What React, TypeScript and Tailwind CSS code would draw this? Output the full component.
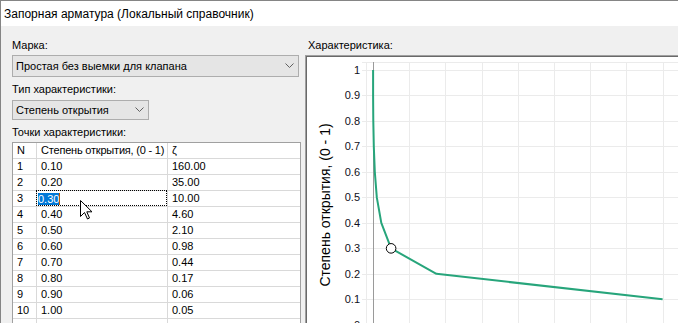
import React from "react";

const rows: [string, string, string][] = [
  ["1", "0.10", "160.00"],
  ["2", "0.20", "35.00"],
  ["3", "0.30", "10.00"],
  ["4", "0.40", "4.60"],
  ["5", "0.50", "2.10"],
  ["6", "0.60", "0.98"],
  ["7", "0.70", "0.44"],
  ["8", "0.80", "0.17"],
  ["9", "0.90", "0.06"],
  ["10", "1.00", "0.05"],
];

const Chevron = () => (
  <svg width="9" height="6" viewBox="0 0 9 6" className="block">
    <path d="M0.5 0.5 L4.5 4.5 L8.5 0.5" fill="none" stroke="#606060" strokeWidth="1" />
  </svg>
);

function Chart() {
  const yOf = (v: number) => 323.8 - 254.8 * v;
  const xOf = (z: number) => 373 + 1.81 * z;
  const pts = rows.map((r) => [xOf(parseFloat(r[2])), yOf(parseFloat(r[1]))]);
  const d = pts.map((p, i) => `${i ? "L" : "M"}${p[0].toFixed(1)} ${p[1].toFixed(1)}`).join(" ");
  const hv = [0, 0.1, 0.2, 0.3, 0.4, 0.5, 0.6, 0.7, 0.8, 0.9, 1];
  const vx = [1, 2, 3, 4, 5, 6, 7, 8, 9].map((i) => 373 + 36.2 * i);
  return (
    <svg width="380" height="270" viewBox="307 56 380 270" className="block">
      <line x1="362" y1="61.5" x2="700" y2="61.5" stroke="#ebebeb" strokeWidth="1" />
      {hv.map((v) => (
        <line key={v} x1="362" y1={Math.round(yOf(v)) + 0.5} x2="700" y2={Math.round(yOf(v)) + 0.5} stroke="#ebebeb" strokeWidth="1" />
      ))}
      <line x1="366.5" y1="61" x2="366.5" y2="330" stroke="#ebebeb" strokeWidth="1" />
      {vx.map((x) => (
        <line key={x} x1={Math.round(x) + 0.5} y1="61" x2={Math.round(x) + 0.5} y2="330" stroke="#ebebeb" strokeWidth="1" />
      ))}
      <line x1="373.5" y1="61" x2="373.5" y2="330" stroke="#9a9a9a" strokeWidth="1" />
      {hv.map((v) => (
        <text
          key={"t" + v}
          x="360"
          y={yOf(v) + 4}
          textAnchor="end"
          fontSize="11"
          fontFamily="'Liberation Sans', Arial, sans-serif"
          fill="#101020"
        >
          {v === 1 ? "1" : v === 0 ? "0" : v.toFixed(1)}
        </text>
      ))}
      <text
        x="0"
        y="0"
        transform="translate(330 204) rotate(-90)"
        textAnchor="middle"
        fontSize="14"
        fontFamily="'Liberation Sans', Arial, sans-serif"
        fill="#000"
      >
        Степень открытия, (0 - 1)
      </text>
      <path d={d} fill="none" stroke="#27a57b" strokeWidth="2" strokeLinejoin="round" />
      <circle cx={pts[2][0]} cy={pts[2][1]} r="4.8" fill="#fff" stroke="#000" strokeWidth="1" />
    </svg>
  );
}

export default function App() {
  return (
    <div className="w-[678px] h-[323px] overflow-hidden bg-[#f0f0f0] border-t border-l border-[#858585] font-['Liberation_Sans',Arial,sans-serif] text-[11px] text-black">
      <div className="h-[25px] bg-white flex items-center pl-[3px] text-[12px] pt-[1px]">
        Запорная арматура (Локальный справочник)
      </div>
      <div className="flex">
        <div className="w-[289px] ml-[11px] flex flex-col">
          <div className="mt-[12px] h-[15px] leading-[15px]">Марка:</div>
          <div className="mt-[2px] h-[22px] w-[287px] border border-[#adadad] bg-[#e5e5e5] flex items-center pl-[3px] pr-[4px]">
            <span className="flex-1">Простая без выемки для клапана</span>
            <Chevron />
          </div>
          <div className="mt-[5px] h-[15px] leading-[15px]">Тип характеристики:</div>
          <div className="mt-[3px] h-[20px] w-[137px] border border-[#adadad] bg-[#e5e5e5] flex items-center pl-[3px] pr-[4px]">
            <span className="flex-1">Степень открытия</span>
            <Chevron />
          </div>
          <div className="mt-[5px] h-[15px] leading-[15px]">Точки характеристики:</div>
          <div className="mt-[2px] w-[289px] border border-[#a0a0a0] bg-white relative">
            <div className="grid grid-cols-[24px_131px_1fr] h-[16px] border-b border-[#d9d9d9] leading-[15px] whitespace-nowrap">
              <div className="border-r border-[#d9d9d9] pl-[4px]">N</div>
              <div className="border-r border-[#d9d9d9] pl-[4px] overflow-hidden tracking-[-0.2px]">Степень открытия, (0 - 1)</div>
              <div className="pl-[4px]">ζ</div>
            </div>
            {rows.map((r, i) => (
              <div key={r[0]} className="grid grid-cols-[24px_131px_1fr] h-[16px] border-b border-[#d9d9d9] leading-[15px] whitespace-nowrap">
                <div className="border-r border-[#d9d9d9] pl-[4px]">{r[0]}</div>
                {i === 2 ? (
                  <div className="border-r border-[#d9d9d9] relative">
                    <div className="absolute inset-[-1px_0_0_-1px] border border-dotted border-black" />
                    <div className="flex items-center h-full pl-[1px]">
                      <span className="bg-[#0078d7] text-white leading-[12px]">0.30</span>
                      <span className="w-[1px] h-[12px] bg-[#c25a00]" />
                    </div>
                  </div>
                ) : (
                  <div className="border-r border-[#d9d9d9] pl-[4px]">{r[1]}</div>
                )}
                <div className="pl-[4px]">{r[2]}</div>
              </div>
            ))}
            <div className="grid grid-cols-[24px_131px_1fr] h-[16px]">
              <div className="border-r border-[#d9d9d9]" />
              <div className="border-r border-[#d9d9d9]" />
              <div />
            </div>
            <svg className="absolute left-[67px] top-[57px]" width="14" height="20" viewBox="0 0 14 20">
              <path d="M0.5 0.5 V16.5 L4.5 12.5 L7.5 19 L9.5 18 L6.8 11.8 L12 11.8 Z" fill="#fff" stroke="#000" strokeWidth="1" strokeLinejoin="miter" />
            </svg>
          </div>
        </div>
        <div className="ml-[4px] flex-1 flex flex-col">
          <div className="mt-[12px] h-[15px] leading-[15px] pl-[3px]">Характеристика:</div>
          <div className="mt-[2px] border-t border-l border-[#a0a0a0]">
            <div className="border-t border-l border-[#696969] bg-white h-[280px] overflow-hidden">
              <Chart />
            </div>
          </div>
        </div>
      </div>
    </div>
  );
}
